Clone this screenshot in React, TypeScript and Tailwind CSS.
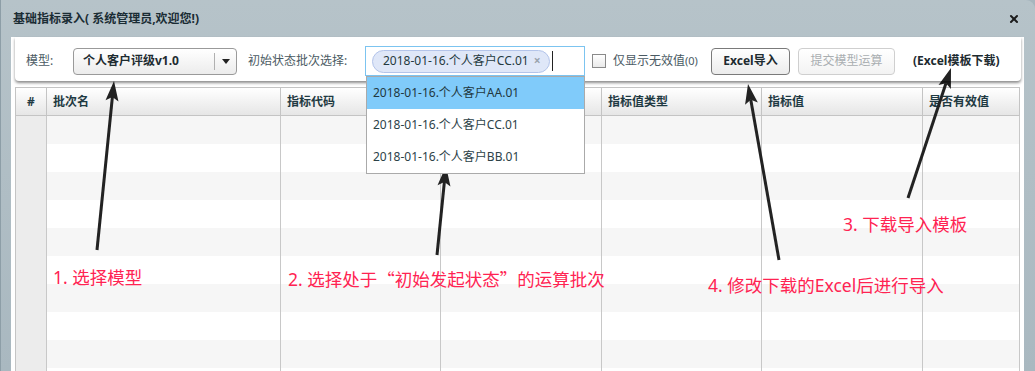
import React from 'react';
import { X } from 'lucide-react';

const font = { fontFamily: '"Noto Sans", "Noto Sans CJK SC", sans-serif' };
const cjk = { fontFamily: '"Noto Sans CJK SC", sans-serif' };

const columns = [
  { title: '#', w: 'w-[31px]', center: true },
  { title: '批次名', w: 'w-[234px]' },
  { title: '指标代码', w: 'w-[160px]' },
  { title: '', w: 'w-[161px]' },
  { title: '指标值类型', w: 'w-[160px]' },
  { title: '指标值', w: 'w-[161px]' },
  { title: '是否有效值', w: 'w-[97px]' },
];

const batches = ['2018-01-16.个人客户AA.01', '2018-01-16.个人客户CC.01', '2018-01-16.个人客户BB.01'];

// arrow from (x1,y1) to tip (x2,y2)
const Arrow: React.FC<{ x1: number; y1: number; x2: number; y2: number }> = ({ x1, y1, x2, y2 }) => {
  const dx = x2 - x1;
  const dy = y2 - y1;
  const len = Math.sqrt(dx * dx + dy * dy);
  const ux = dx / len;
  const uy = dy / len;
  const headLen = 20;
  const headW = 6.5;
  const bx = x2 - ux * headLen;
  const by = y2 - uy * headLen;
  const pts = `${x2},${y2} ${bx - uy * headW},${by + ux * headW} ${bx + ux * 4},${by + uy * 4} ${bx + uy * headW},${by - ux * headW}`;
  return (
    <g>
      <line x1={x1} y1={y1} x2={bx + ux * 4} y2={by + uy * 4} stroke="#222" strokeWidth={3} />
      <polygon points={pts} fill="#222" />
    </g>
  );
};

export default function App() {
  return (
    <div className="relative h-[371px] w-[1035px] overflow-hidden bg-[#a7b6be]" style={font}>
      <div className="flex h-full flex-col rounded-tr-[9px] border-l border-[#8d9ea7] bg-gradient-to-b from-[#b6c3c9] to-[#a9b8c0]">
        {/* Title bar */}
        <div className="flex h-[37px] shrink-0 items-center justify-between pl-[12px] pr-[15px]">
          <span className="text-[12px] font-bold text-[#1a2c34]">基础指标录入( 系统管理员,欢迎您!)</span>
          <X size={12} strokeWidth={4} className="text-[#1c1c1c]" />
        </div>

        {/* Content */}
        <div className="ml-[10px] mr-[11px] flex flex-1 flex-col bg-white pl-[4px] pr-[3px]">
          {/* Toolbar */}
          <div className="relative z-10 flex h-[44px] shrink-0 items-center rounded-b-[4px] pt-[4px] shadow-[0_2px_3px_rgba(0,0,0,0.45)]">
            <span className="ml-[11px] w-[47px] text-[12px] text-[#4a5a63]">模型:</span>
            <div className="flex h-[27px] w-[164px] items-center rounded-[4px] border border-[#9a9a9a] bg-gradient-to-b from-white to-[#ececec]">
              <span className="flex-1 pl-[9px] text-[12px] font-bold text-[#1d2b30]">个人客户评级v1.0</span>
              <div className="flex h-[17px] w-[22px] items-center justify-center border-l border-[#b0b0b0]">
                <svg width="8" height="5" viewBox="0 0 8 5"><polygon points="0,0 8,0 4,5" fill="#222" /></svg>
              </div>
            </div>
            <span className="ml-[11px] w-[117px] text-[12px] text-[#4a5a63]">初始状态批次选择:</span>
            <div className="relative flex h-[30px] w-[220px] items-center border border-[#7cc4f0] bg-white pl-[6px]">
              <div className="flex h-[23px] items-center rounded-full border border-[#b3c4ea] bg-[#dfe7f8] pl-[10px] pr-[8px]">
                <span className="text-[12px] text-[#253a40]">2018-01-16.个人客户CC.01</span>
                <span className="ml-[5px] text-[12px] font-bold leading-none text-[#9aa3ad]">×</span>
              </div>
              <div className="ml-[2px] h-[20px] w-px bg-[#222]" />
              {/* Dropdown */}
              <div className="absolute left-0 top-[29px] z-20 w-[219px] border border-[#aaaaaa] bg-white">
                {batches.map((b, i) => (
                  <div
                    key={b}
                    className={
                      i === 0
                        ? 'flex h-[32px] items-center bg-[#80cbfa] pl-[6px] text-[12px] text-[#22383e]'
                        : 'flex h-[32px] items-center pl-[6px] text-[12px] text-[#2c4248]'
                    }
                  >
                    {b}
                  </div>
                ))}
              </div>
            </div>
            <div className="ml-[7px] h-[14px] w-[14px] border border-[#8a8a8a] bg-gradient-to-b from-white to-[#eaeaea]" />
            <span className="ml-[7px] w-[98px] text-[12px] text-[#4a5a63]">
              仅显示无效值<span className="text-[11px]">(0)</span>
            </span>
            <div className="flex h-[27px] w-[79px] items-center justify-center rounded-[4px] border border-[#7a7a7a] bg-gradient-to-b from-white to-[#ececec] text-[12px] font-bold text-[#1d2b30]">
              Excel导入
            </div>
            <div className="ml-[8px] flex h-[27px] w-[97px] items-center justify-center rounded-[4px] border border-[#cfcfcf] bg-gradient-to-b from-white to-[#f3f3f3] text-[12px] text-[#a9aeb1]">
              提交模型运算
            </div>
            <span className="ml-[18px] text-[12px] font-bold text-[#1d2b30]">(Excel模板下载)</span>
          </div>

          {/* Table */}
          <div className="mt-[6px] flex w-[1005px] flex-1 flex-col border-l border-t border-[#c4c4c4]">
            <div className="flex h-[28px] shrink-0 border-b border-[#c4c4c4] bg-gradient-to-b from-white to-[#e6e6e6]">
              {columns.map((c, i) => (
                <div
                  key={i}
                  className={`${c.w} flex shrink-0 items-center border-r border-[#c4c4c4] text-[12px] font-bold text-[#1f3a42] ${c.center ? 'justify-center' : 'pl-[6px]'}`}
                >
                  {c.title}
                </div>
              ))}
            </div>
            {Array.from({ length: 10 }).map((_, r) => (
              <div key={r} className={`flex h-[28px] shrink-0 ${r % 2 === 0 ? 'bg-[#f6f6f6]' : 'bg-white'}`}>
                {columns.map((c, i) => (
                  <div
                    key={i}
                    className={`${c.w} shrink-0 border-r border-[#c8c8c8] ${i === 0 ? 'bg-[#ececec]' : ''}`}
                  />
                ))}
              </div>
            ))}
          </div>
        </div>
      </div>

      {/* Annotations */}
      <span className="absolute left-[53px] top-[264px] text-[17.5px] text-[#ff2352]">1. 选择模型</span>
      <span className="absolute left-[288px] top-[266px] text-[17.5px] text-[#ff2352]">
        2. 选择处于<span style={cjk}>“</span>初始发起状态<span style={cjk}>”</span>的运算批次
      </span>
      <span className="absolute left-[843px] top-[211px] text-[17.5px] text-[#ff2352]">3. 下载导入模板</span>
      <span className="absolute left-[708px] top-[272px] text-[17.5px] text-[#ff2352]">4. 修改下载的Excel后进行导入</span>

      <svg className="pointer-events-none absolute inset-0" width="1035" height="371">
        <Arrow x1={97} y1={250} x2={114} y2={81} />
        <Arrow x1={437} y1={255} x2={446} y2={166} />
        <Arrow x1={908} y1={198} x2={951} y2={68} />
        <Arrow x1={779} y1={260} x2={748} y2={84} />
      </svg>
    </div>
  );
}
